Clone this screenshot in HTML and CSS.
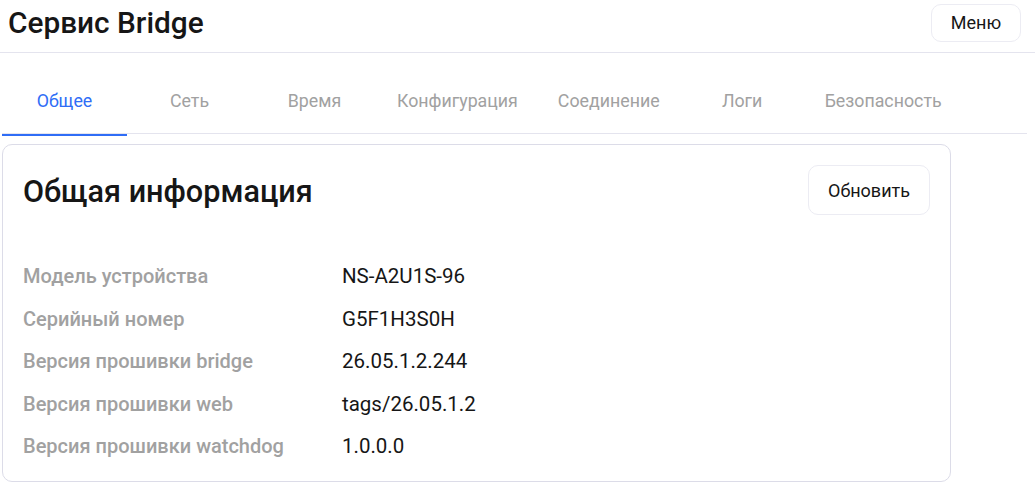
FILE: index.html
```html
<!DOCTYPE html>
<html lang="ru">
<head>
    <meta charset="UTF-8">
    <meta name="viewport" content="width=device-width, initial-scale=1.0">
    <title>Сервис Bridge</title>
    <link rel="stylesheet" href="styles.css">
</head>
<body>

    <header class="topbar">
        <h1 class="topbar-title">Сервис Bridge</h1>
        <button class="btn">Меню</button>
    </header>

    <main class="content">
        <nav class="tabs">
            <div class="tab active">Общее</div>
            <div class="tab">Сеть</div>
            <div class="tab">Время</div>
            <div class="tab">Конфигурация</div>
            <div class="tab">Соединение</div>
            <div class="tab">Логи</div>
            <div class="tab">Безопасность</div>
        </nav>

        <section class="card">
            <div class="card-header">
                <h2 class="card-title">Общая информация</h2>
                <button class="btn btn-lg">Обновить</button>
            </div>
            <div class="info-table">
                <div class="info-label">Модель устройства</div>
                <div class="info-value">NS-A2U1S-96</div>
                <div class="info-label">Серийный номер</div>
                <div class="info-value">G5F1H3S0H</div>
                <div class="info-label">Версия прошивки bridge</div>
                <div class="info-value">26.05.1.2.244</div>
                <div class="info-label">Версия прошивки web</div>
                <div class="info-value">tags/26.05.1.2</div>
                <div class="info-label">Версия прошивки watchdog</div>
                <div class="info-value">1.0.0.0</div>
            </div>
        </section>
    </main>

</body>
</html>
```

FILE: styles.css
```css
:root {
    --text-dark: #161616;
    --text-muted: #a1a1a1;
    --line: #e4e4ee;
    --card-line: #dcdce8;
    --accent: #2f6df6;
}
body {
    font-family: 'Roboto', 'Noto Sans', sans-serif;
    margin: 0;
    padding: 0;
    background: #fff;
    color: var(--text-dark);
}
.topbar {
    display: flex;
    align-items: center;
    justify-content: space-between;
    height: 53px;
    padding: 0 14px 0 8px;
    border-bottom: 1px solid var(--line);
    box-sizing: border-box;
}
.topbar-title {
    margin: 0;
    font-size: 29.8px;
    font-weight: 500;
    margin-top: -8px;
}
.btn {
    font-family: inherit;
    font-size: 18px;
    color: var(--text-dark);
    background: #fff;
    border: 1px solid #ececf3;
    border-radius: 10px;
    height: 38px;
    width: 90px;
    cursor: pointer;
    margin-top: -7px;
}
.btn-lg {
    height: 50px;
    width: 122px;
    margin-top: 0;
}
.content {
    padding: 0 8px 0 2px;
}
.tabs {
    display: flex;
    margin-top: 14px;
    border-bottom: 1px solid var(--line);
}
.tab {
    position: relative;
    min-width: 85px;
    padding: 23px 20px 22px;
    font-size: 17.8px;
    line-height: 21px;
    text-align: center;
    color: var(--text-muted);
    cursor: pointer;
}
.tab.active {
    color: var(--accent);
}
.tab.active::after {
    content: '';
    position: absolute;
    left: 0;
    right: 0;
    bottom: -3px;
    height: 2px;
    background: var(--accent);
}
.card {
    width: 949px;
    box-sizing: border-box;
    margin-top: 10px;
    padding: 20px 20px 14px;
    border: 1px solid var(--card-line);
    border-radius: 10px;
}
.card-header {
    display: flex;
    align-items: center;
    justify-content: space-between;
}
.card-title {
    margin: 0;
    font-size: 30.6px;
    font-weight: 500;
    margin-top: 2px;
}
.info-table {
    display: grid;
    grid-template-columns: 319px 1fr;
    grid-auto-rows: 42.5px;
    align-items: center;
    margin-top: 40px;
    margin-bottom: -1px;
    font-size: 20px;
}
.info-label {
    color: var(--text-muted);
    font-weight: 500;
}
.info-value {
    color: var(--text-dark);
    font-size: 20.5px;
}
```
